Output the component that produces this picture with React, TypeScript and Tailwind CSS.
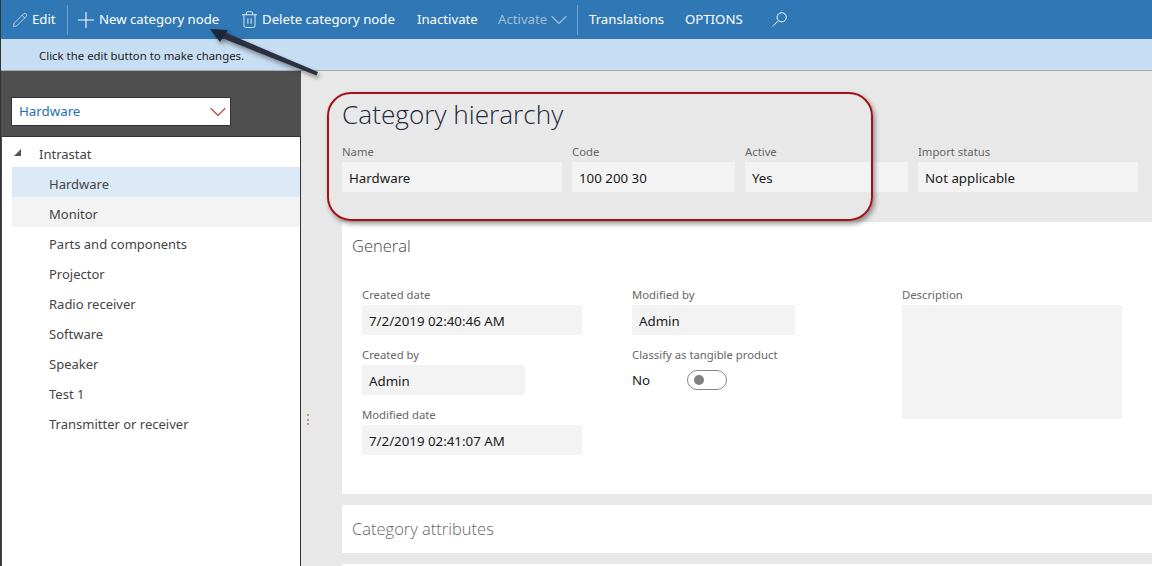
import { Pencil, Plus, Trash2, ChevronDown } from 'lucide-react';

const TREE_ITEMS = [
  'Hardware',
  'Monitor',
  'Parts and components',
  'Projector',
  'Radio receiver',
  'Software',
  'Speaker',
  'Test 1',
  'Transmitter or receiver',
];

const Field = ({
  label,
  value,
  width,
}: {
  label: string;
  value: string;
  width: string;
}) => (
  <div className={width}>
    <div className="h-[20px] text-[11.3px] leading-[20px] text-[#666666]">{label}</div>
    <div className="h-[30px] bg-[#f3f3f3] pl-[7px] text-[13.3px] leading-[32px] text-[#1a1a1a]">
      {value}
    </div>
  </div>
);

const App = () => {
  return (
    <div
      className="relative flex h-[566px] w-[1152px] flex-col overflow-hidden border-l border-[#333333] bg-[#e8e8e8]"
      style={{ fontFamily: '"Noto Sans", "Open Sans", sans-serif' }}
    >
      {/* Action pane */}
      <div className="flex h-[39px] shrink-0 items-center bg-[#2f78b5] pl-[11px] text-[13.2px] whitespace-nowrap text-white">
        <Pencil size={16} strokeWidth={1} className="mr-[4px]" />
        <span className="w-[24px]">Edit</span>
        <div className="ml-[11px] h-[30px] w-px bg-[#6f9fcb]" />
        <Plus size={26} strokeWidth={1} className="ml-[5px] shrink-0" />
        <span className="w-[122px]">New category node</span>
        <Trash2 size={19} strokeWidth={1} className="ml-[19px] mr-[3px] shrink-0" />
        <span className="w-[133px]">Delete category node</span>
        <span className="ml-[22px] w-[59px]">Inactivate</span>
        <span className="ml-[22px] w-[50px] text-[#a3bdd6]">Activate</span>
        <ChevronDown size={28} strokeWidth={1} className="-ml-[3px] shrink-0 text-[#a3bdd6]" />
        <div className="ml-[4px] h-[30px] w-px bg-[#6f9fcb]" />
        <span className="ml-[11px] w-[74px]">Translations</span>
        <span className="ml-[22px] w-[58px]">OPTIONS</span>
        <svg className="ml-[29px] -mt-[1px] shrink-0" width="15" height="15" viewBox="0 0 15 15" fill="none" stroke="currentColor" strokeWidth="1">
          <circle cx="9.7" cy="5.3" r="4.6" />
          <line x1="6.4" y1="8.6" x2="0.5" y2="14.5" />
        </svg>
      </div>

      {/* Message bar */}
      <div className="h-[32px] shrink-0 border-b border-[#a8a8a8] bg-[#c7ddf2] pl-[38px] text-[11.4px] leading-[34px] text-[#222222]">
        Click the edit button to make changes.
      </div>

      <div className="flex min-h-0 flex-1">
        {/* Tree pane */}
        <div className="flex w-[300px] shrink-0 flex-col">
          <div className="h-[65px] shrink-0 bg-[#4f4f4f] pt-[26px] pl-[10px]">
            <div className="flex h-[29px] w-[220px] items-center justify-between overflow-hidden border border-[#333333] bg-white pl-[7px] text-[13.3px] text-[#1f6fb2]">
              <span className="mt-[1px]">Hardware</span>
              <ChevronDown size={28} strokeWidth={1.1} className="-mr-[2px] text-[#b5504f]" />
            </div>
          </div>
          <div className="flex-1 border-t border-r border-l border-[#333333] border-l-[#4a4a4a] bg-white pl-[10px] text-[13px] leading-[35px] text-[#444444]">
            <div className="relative h-[30px] pl-[27px]">
              <span className="absolute top-[12px] left-[2px] h-0 w-0 border-b-[7px] border-l-[7px] border-b-[#555555] border-l-transparent" />
              Intrastat
            </div>
            {TREE_ITEMS.map((item, i) => (
              <div
                key={item}
                className={`h-[30px] pl-[37px] ${
                  i === 0 ? 'bg-[#dce9f7]' : i === 1 ? 'bg-[#f3f3f3]' : ''
                }`}
              >
                {item}
              </div>
            ))}
          </div>
        </div>

        {/* Splitter */}
        <div className="w-[41px] shrink-0 pt-[343px] pl-[6px]">
          <div className="flex h-[11px] w-[2px] flex-col justify-between">
            <span className="h-[2px] w-[2px] bg-[#c89a68]" />
            <span className="h-[2px] w-[2px] bg-[#c89a68]" />
            <span className="h-[2px] w-[2px] bg-[#c89a68]" />
          </div>
        </div>

        {/* Content */}
        <div className="min-w-0 flex-1">
          <h1 className="h-[62px] pt-[24px] font-['Open_Sans'] text-[26.2px] leading-[38px] font-light text-[#1c2a3a]">
            Category hierarchy
          </h1>
          <div className="flex h-[89px] gap-[10px] pt-[9px]">
            <Field label="Name" value="Hardware" width="w-[220px]" />
            <Field label="Code" value="100 200 30" width="w-[163px]" />
            <Field label="Active" value="Yes" width="w-[163px]" />
            <Field label="Import status" value="Not applicable" width="w-[220px]" />
          </div>

          <div className="h-[272px] bg-white pt-[10px] pl-[10px]">
            <div className="font-['Open_Sans'] text-[16.5px] leading-[28px] font-light text-[#444444]">
              General
            </div>
            <div className="mt-[25px] flex pl-[10px]">
              <div className="flex w-[270px] flex-col gap-[10px]">
                <Field label="Created date" value="7/2/2019 02:40:46 AM" width="w-[220px]" />
                <Field label="Created by" value="Admin" width="w-[163px]" />
                <Field label="Modified date" value="7/2/2019 02:41:07 AM" width="w-[220px]" />
              </div>
              <div className="flex w-[270px] flex-col gap-[10px]">
                <Field label="Modified by" value="Admin" width="w-[163px]" />
                <div>
                  <div className="h-[20px] text-[11.3px] leading-[20px] text-[#666666]">
                    Classify as tangible product
                  </div>
                  <div className="flex h-[30px] items-center text-[13.3px] text-[#1a1a1a]">
                    <span className="mt-[2px] w-[55px]">No</span>
                    <div className="flex h-[20px] w-[40px] items-center rounded-full border border-[#888888] pl-[6px]">
                      <span className="h-[10px] w-[10px] rounded-full bg-[#808080]" />
                    </div>
                  </div>
                </div>
              </div>
              <div className="w-[220px]">
                <div className="h-[20px] text-[11.3px] leading-[20px] text-[#666666]">Description</div>
                <div className="h-[114px] bg-[#f3f3f3]" />
              </div>
            </div>
          </div>

          <div className="mt-[11px] h-[48px] bg-white pl-[10px] font-['Open_Sans'] text-[16.5px] leading-[48px] font-light text-[#666666]">
            Category attributes
          </div>
          <div className="mt-[11px] h-[20px] bg-white" />
        </div>
      </div>

      {/* Callout annotations */}
      <div className="pointer-events-none absolute top-[92px] left-[326px] h-[129px] w-[546px] rounded-[24px] border-2 border-[#a51016] shadow-[2px_3px_5px_rgba(0,0,0,0.4)]" />
      <svg className="pointer-events-none absolute top-0 -left-px drop-shadow-[2px_3px_2px_rgba(0,0,0,0.4)]" width="340" height="90" viewBox="0 0 340 90">
        <path d="M318 72 L316.5 75.5 L222 38 L224 32 Z" fill="#2b3040" />
        <path d="M210 29 L228 30 L220 42 Z" fill="#20263a" />
      </svg>
    </div>
  );
};

export default App;
